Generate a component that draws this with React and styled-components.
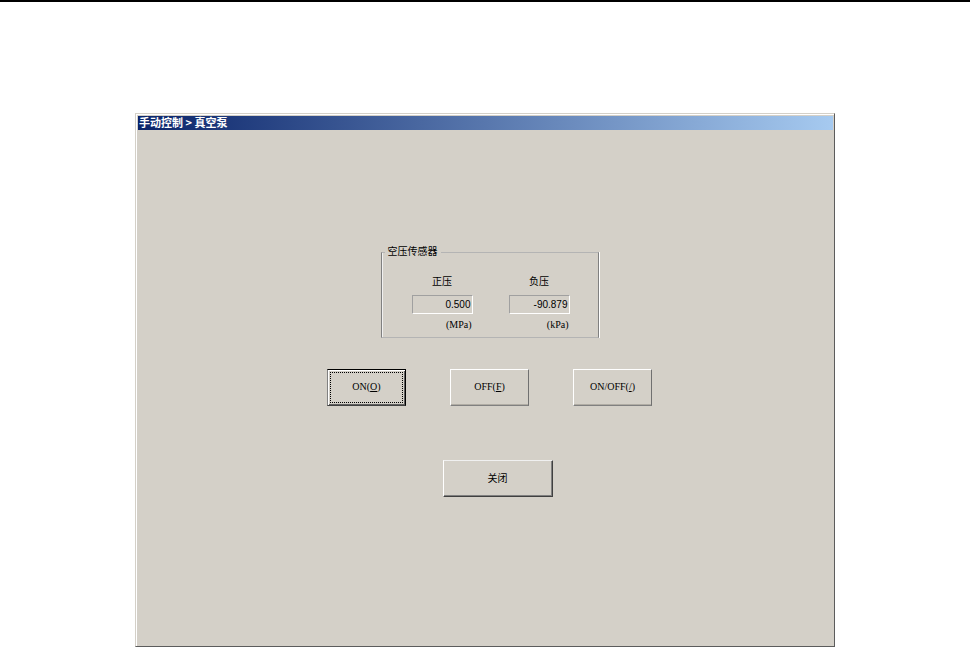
import styled, { createGlobalStyle, css } from 'styled-components';

const GlobalStyle = createGlobalStyle`
    * {
        box-sizing: border-box;
    }

    body {
        margin: 0;
        background: #fff;
        color: #000;
        font-family: 'Liberation Serif', 'Noto Sans CJK SC', serif;
        font-size: 10px;
        line-height: 12px;
    }
`;

const sensors = [
    { id: 'positive', label: '正压', value: '0.500', unit: '(MPa)' },
    { id: 'negative', label: '负压', value: '-90.879', unit: '(kPa)' },
];

const actions = [
    { id: 'on', label: 'ON', accessKey: 'O', isDefault: true },
    { id: 'off', label: 'OFF', accessKey: 'F' },
    { id: 'toggle', label: 'ON/OFF', accessKey: '/' },
];

const Sensor = ({ id, label, value, unit }) => (
    <SensorWrapper>
        <SensorLabel htmlFor={id}>{label}</SensorLabel>
        <SensorInput id={id} type='text' value={value} readOnly />
        <SensorUnit>{unit}</SensorUnit>
    </SensorWrapper>
);

const App = () => {
    return (
        <Page>
            <GlobalStyle />
            <Window>
                <TitleBar>手动控制 &gt; 真空泵</TitleBar>
                <Content>
                    <SensorGroup>
                        <SensorLegend>空压传感器</SensorLegend>
                        <SensorList>
                            {sensors.map(sensor => (
                                <Sensor key={sensor.id} {...sensor} />
                            ))}
                        </SensorList>
                    </SensorGroup>
                    <Actions>
                        {actions.map(action => {
                            const { id, label, accessKey, isDefault } = action;
                            return (
                                <Button key={id} type='button' accessKey={accessKey} $isDefault={isDefault}>
                                    <ButtonText $isFocused={isDefault}>
                                        {label}(<u>{accessKey}</u>)
                                    </ButtonText>
                                </Button>
                            )
                        })}
                    </Actions>
                    <Footer>
                        <CloseButton type='button'>关闭</CloseButton>
                    </Footer>
                </Content>
            </Window>
        </Page>
    );
};

const Page = styled.div`
    padding: 111px 135px 0;
    border-top: 2px solid #000;
`;

const Window = styled.main`
    padding: 2px 1px 0 2px;
    border: 1px solid;
    border-color: #d4d0c8 #5c5c5c #5c5c5c #d4d0c8;
    background: #d4d0c8;
    box-shadow: inset 1px 1px 0 #fff;
`;

const TitleBar = styled.h1`
    margin: 0;
    padding: 0 1px 2px;
    background: linear-gradient(to right, #0a246a, #a6caf0);
    color: #fff;
    font: bold 11px/12px 'Noto Sans CJK SC', sans-serif;
`;

const Content = styled.div`
    display: flex;
    flex-direction: column;
    align-items: center;
    padding: 116px 0 149px 8px;
`;

const SensorGroup = styled.fieldset`
    width: 218px;
    margin: 0;
    padding: 0 0 6px 2px;
    border: 1px solid;
    border-color: #b4b4b4 #808080 #b4b4b4 #808080;
    box-shadow: 1px 0 0 #fff, inset 1px 0 0 #f0f0f0;
`;

const SensorLegend = styled.legend`
    margin-left: 1px;
    padding: 0 3px;
`;

const SensorList = styled.div`
    display: flex;
    justify-content: center;
    gap: 36px;
    padding-top: 18px;
`;

const SensorWrapper = styled.div`
    display: flex;
    flex-direction: column;
    width: 61px;
`;

const SensorLabel = styled.label`
    margin-bottom: 7px;
    text-align: center;
`;

const SensorInput = styled.input`
    width: 100%;
    height: 19px;
    margin: 0 0 5px;
    padding: 0 1px;
    border: 1px solid;
    border-color: #a0a0a0 #fff #fff #a0a0a0;
    background: #d4d0c8;
    color: #000;
    font: 10px/12px 'Liberation Sans', sans-serif;
    text-align: right;
    outline: none;
`;

const SensorUnit = styled.span`
    padding-right: 1px;
    text-align: right;
`;

const Actions = styled.div`
    display: flex;
    gap: 44px;
    margin-top: 31px;
`;

const Button = styled.button`
    width: 79px;
    height: 37px;
    padding: 2px;
    border: 1px solid;
    border-color: #fff #707070 #808080 #fff;
    background: #d4d0c8;
    box-shadow: inset 0 -1px 0 #b0aca4;
    color: #000;
    font: inherit;

    ${({ $isDefault }) => $isDefault && css`
        border-color: #000 #000 #404040 #808080;
        box-shadow: inset 1px 1px 0 #fff, inset -1px -1px 0 #606060;
    `}
`;

const ButtonText = styled.span`
    display: block;
    padding: 8px 0 9px;
    border: 1px dotted ${({ $isFocused }) => $isFocused ? '#000' : 'transparent'};
`;

const Footer = styled.div`
    margin-top: 54px;
    padding-left: 16px;
`;

const CloseButton = styled(Button)`
    width: 110px;
    border-color: #f0f0f0 #404040 #404040 #fff;
    box-shadow: inset -1px -1px 0 #808080;
`;

export default App;
